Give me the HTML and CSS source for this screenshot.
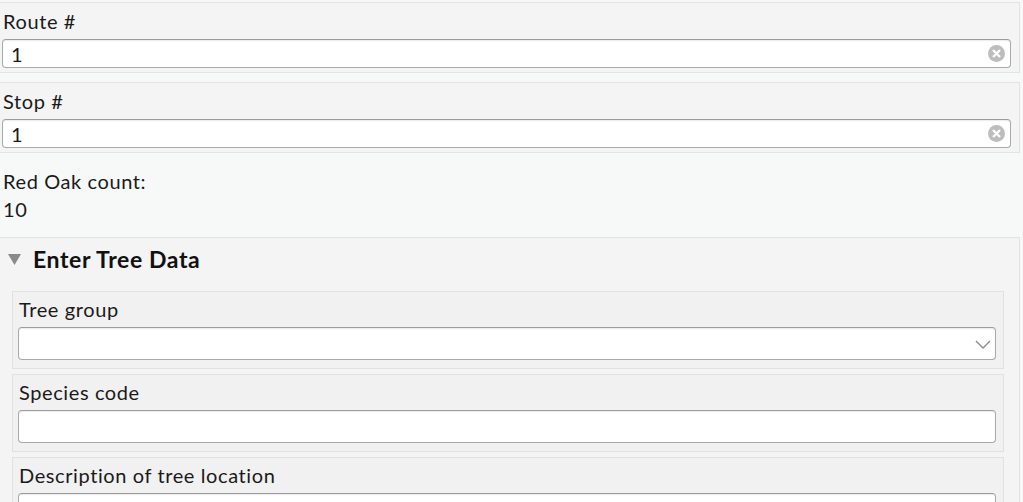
FILE: index.html
```html
<!DOCTYPE html>
<html>
<head>
<meta charset="utf-8">
<link rel="stylesheet" href="styles.css">
</head>
<body>
<div class="page">
  <div class="field">
    <div class="label">Route #</div>
    <div class="input">
      <span class="value">1</span>
      <svg class="clear" width="17" height="17" viewBox="0 0 17 17"><circle cx="8.5" cy="8.5" r="8.5" fill="#bdbdbd"/><path d="M5.6 5.6 L11.4 11.4 M11.4 5.6 L5.6 11.4" stroke="#fff" stroke-width="2.2" stroke-linecap="round"/></svg>
    </div>
  </div>
  <div class="field">
    <div class="label">Stop #</div>
    <div class="input">
      <span class="value">1</span>
      <svg class="clear" width="17" height="17" viewBox="0 0 17 17"><circle cx="8.5" cy="8.5" r="8.5" fill="#bdbdbd"/><path d="M5.6 5.6 L11.4 11.4 M11.4 5.6 L5.6 11.4" stroke="#fff" stroke-width="2.2" stroke-linecap="round"/></svg>
    </div>
  </div>
  <div class="note">
    <div class="note-label">Red Oak count:</div>
    <div class="note-value">10</div>
  </div>
  <div class="group">
    <div class="group-head">
      <svg class="tri" width="13" height="11" viewBox="0 0 13 11"><path d="M0 0 H13 L6.5 11 Z" fill="#8a8a8a"/></svg>
      <span class="group-title">Enter Tree Data</span>
    </div>
    <div class="group-body">
      <div class="subfield">
        <div class="label">Tree group</div>
        <div class="input tall">
          <svg class="chev" width="16" height="9" viewBox="0 0 16 9"><path d="M1 1 L8 8 L15 1" fill="none" stroke="#8c8c8c" stroke-width="1.3"/></svg>
        </div>
      </div>
      <div class="subfield">
        <div class="label">Species code</div>
        <div class="input tall"></div>
      </div>
      <div class="subfield">
        <div class="label">Description of tree location</div>
        <div class="input tall"></div>
      </div>
    </div>
  </div>
</div>
</body>
</html>
```

FILE: styles.css
```css
html, body {
  margin: 0;
  padding: 0;
  background: #f7f8f8;
  overflow: hidden;
}
body {
  font-family: Lato, "Noto Sans", sans-serif;
  color: #1a1a1a;
}
.page {
  width: 1020px;
  padding-top: 2px;
}
.field {
  background: #f3f4f3;
  border: 1px solid #e2e3e2;
  border-left: none;
  padding: 5px 8px 4px 2px;
  margin-bottom: 9px;
  box-sizing: border-box;
  height: 71px;
}
.label {
  font-size: 20px;
  letter-spacing: 0.6px;
  line-height: 26px;
  padding-left: 1px;
  margin-bottom: 5px;
}
.input {
  position: relative;
  height: 29px;
  box-sizing: border-box;
  background: #fff;
  border: 1px solid #a9a9a9;
  border-top-color: #9c9c9c;
  border-radius: 4px;
  box-shadow: inset 0 1px 1px rgba(0,0,0,0.08);
  display: flex;
  align-items: center;
}
.value {
  font-size: 20px;
  padding-left: 8px;
  flex: 1;
}
.clear {
  margin-right: 5px;
}
.note {
  padding: 5px 0 0 3px;
  height: 75px;
  box-sizing: border-box;
}
.note-label,
.note-value {
  font-size: 20px;
  letter-spacing: 0.6px;
  line-height: 28px;
}
.group {
  background: #f3f4f3;
  border-top: 1px solid #e2e3e2;
  border-right: 1px solid #e2e3e2;
  height: 300px;
}
.group-head {
  display: flex;
  align-items: center;
  height: 42px;
  padding-left: 8px;
}
.tri {
  margin-right: 12px;
  margin-top: 1px;
}
.group-title {
  font-size: 23px;
  letter-spacing: 0.6px;
  font-weight: 700;
  color: #111;
}
.group-body {
  padding: 11px 15px 0 12px;
}
.subfield {
  background: #f0f1f0;
  border: 1px solid #e0e1e0;
  padding: 4px 7px 8px 5px;
  margin-bottom: 5px;
  height: 78px;
  box-sizing: border-box;
}
.input.tall {
  height: 33px;
}
.chev {
  position: absolute;
  right: 4px;
  top: 12px;
}
```
